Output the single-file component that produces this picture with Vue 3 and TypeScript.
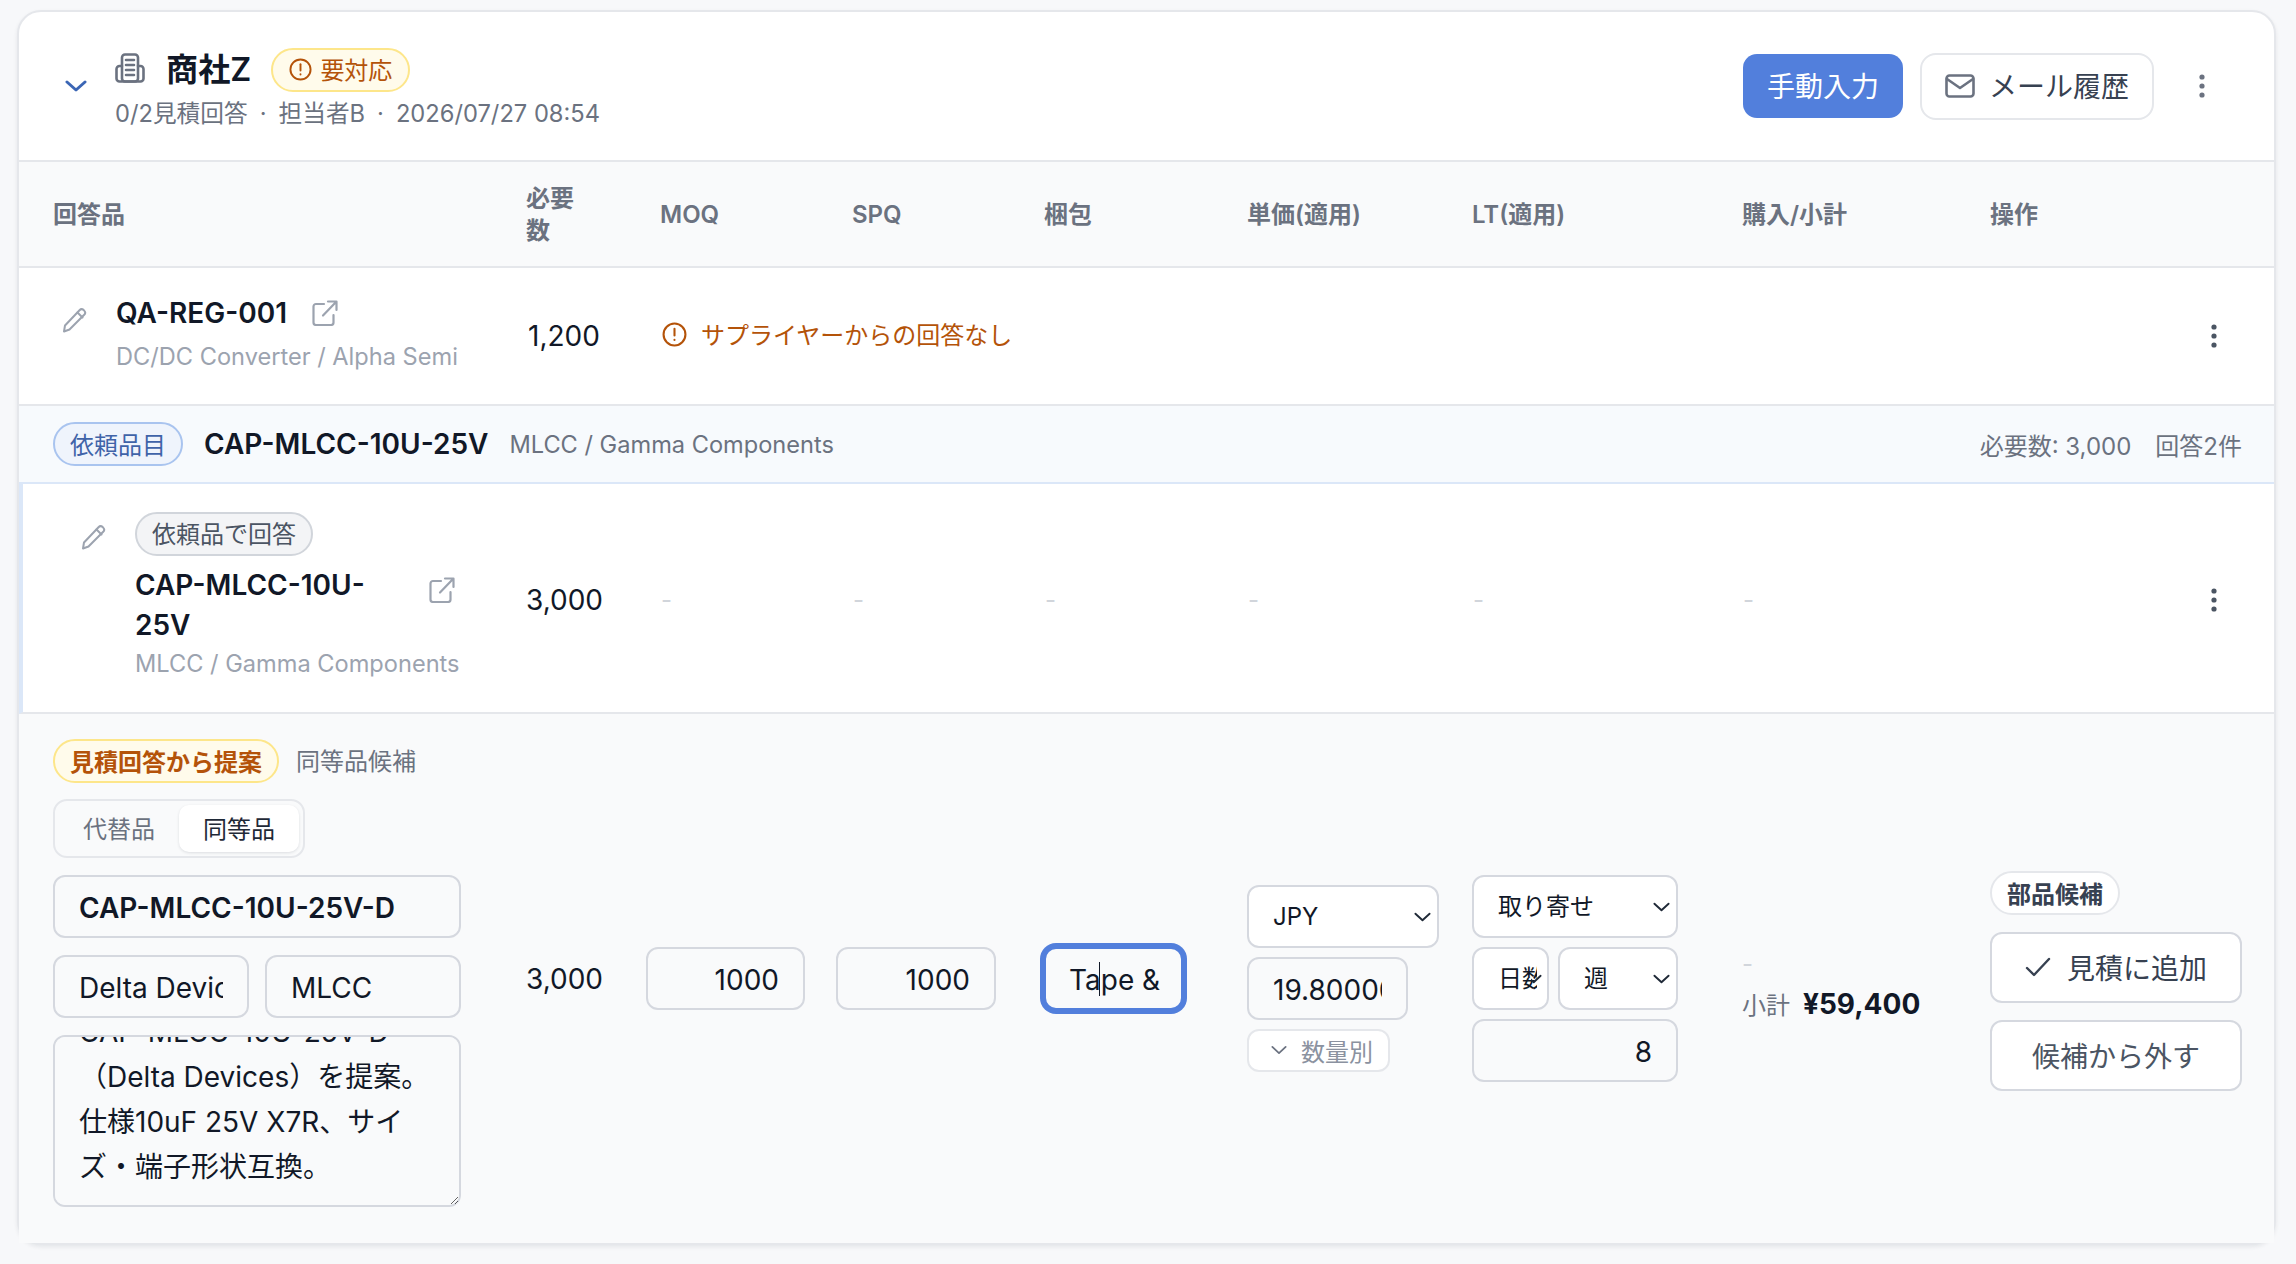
<script setup lang="ts">
import { onMounted, ref } from 'vue';

const columns = ['回答品', '必要数', 'MOQ', 'SPQ', '梱包', '単価(適用)', 'LT(適用)', '購入/小計', '操作'];
const emptyCells = 6;
const noteText = 'CAP-MLCC-10U-25V-D（Delta Devices）を提案。仕様10uF 25V X7R、サイズ・端子形状互換。';

const noteRef = ref<HTMLTextAreaElement | null>(null);

onMounted(() => {
    if (noteRef.value) noteRef.value.scrollTop = noteRef.value.scrollHeight;
});
</script>

<template>
    <div class="page">
        <section class="card">
            <header class="head">
                <svg class="head-chevron" viewBox="0 0 22 12" fill="none" stroke="#3b66b5" stroke-width="3" stroke-linecap="round" stroke-linejoin="round">
                    <polyline points="2 2 11 10 20 2" />
                </svg>
                <svg class="building" viewBox="0 0 30 30" fill="none" stroke="#6b7280" stroke-width="2.6" stroke-linecap="round" stroke-linejoin="round">
                    <rect x="7" y="1.5" width="16" height="27" rx="3" />
                    <path d="M7 13H4.500a3 3 0 0 0-3 3v9.500a3 3 0 0 0 3 3h21a3 3 0 0 0 3-3V16a3 3 0 0 0-3-3H23" />
                    <path d="M11 7h8M11 12h8M11 17h8M11 22h8" />
                </svg>
                <div class="head-main">
                    <div class="head-title">
                        <h2>商社Z</h2>
                        <span class="pill pill-warn">
                            <svg class="icon-alert-sm" viewBox="0 0 24 24" fill="none" stroke="#b45309" stroke-width="2" stroke-linecap="round">
                                <circle cx="12" cy="12" r="10.500" />
                                <line x1="12" y1="6.500" x2="12" y2="13" />
                                <line x1="12" y1="17" x2="12" y2="17.200" />
                            </svg>
                            要対応
                        </span>
                    </div>
                    <div class="head-sub">
                        <span>0/2見積回答</span>
                        <span>·</span>
                        <span>担当者B</span>
                        <span>·</span>
                        <span>2026/07/27 08:54</span>
                    </div>
                </div>
                <button class="btn-primary">手動入力</button>
                <button class="btn-mail">
                    <svg class="icon-mail" viewBox="0 0 30 24" fill="none" stroke="#6b7280" stroke-width="2.600" stroke-linecap="round" stroke-linejoin="round">
                        <rect x="1.500" y="1.500" width="27" height="21" rx="3" />
                        <polyline points="2 5 15 14 28 5" />
                    </svg>
                    メール履歴
                </button>
                <svg class="kebab kebab-head" viewBox="0 0 10 24" fill="#6b7280">
                    <circle cx="5" cy="3" r="2.600" />
                    <circle cx="5" cy="12" r="2.600" />
                    <circle cx="5" cy="21" r="2.600" />
                </svg>
            </header>

            <div class="grid-row thead">
                <div v-for="c in columns" :key="c" class="th">{{ c }}</div>
            </div>

            <!-- 回答なしの行 -->
            <div class="grid-row row-plain">
                <div class="part-cell">
                    <svg class="pencil" viewBox="0 0 26 26" fill="none" stroke="#9ca3af" stroke-width="2" stroke-linecap="round" stroke-linejoin="round">
                        <path d="M3 18.500 17.500 3.200a3 3 0 0 1 4.200-.1l.5.5a3 3 0 0 1 0 4.200L7.500 22.500 2 24.500z" />
                        <path d="M15.500 5.500l5 5" />
                    </svg>
                    <div class="part-text">
                        <div class="part-line">
                            <span class="part-name">QA-REG-001</span>
                            <svg class="ext" viewBox="0 0 26 26" fill="none" stroke="#9ca3af" stroke-width="2.200" stroke-linecap="round" stroke-linejoin="round">
                                <path d="M12 4H4a2.500 2.500 0 0 0-2.500 2.500v16A2.500 2.500 0 0 0 4 25h15a2.500 2.500 0 0 0 2.500-2.500V15" />
                                <path d="M16 1.500h8.500V10M24 2 11 15.500" />
                            </svg>
                        </div>
                        <div class="part-sub">DC/DC Converter / Alpha Semi</div>
                    </div>
                </div>
                <div class="qty">1,200</div>
                <div class="no-answer">
                    <svg class="icon-alert" viewBox="0 0 24 24" fill="none" stroke="#b45309" stroke-width="2" stroke-linecap="round">
                        <circle cx="12" cy="12" r="10.500" />
                        <line x1="12" y1="6.500" x2="12" y2="13" />
                        <line x1="12" y1="17" x2="12" y2="17.200" />
                    </svg>
                    サプライヤーからの回答なし
                </div>
                <div class="op-cell">
                    <svg class="kebab" viewBox="0 0 10 24" fill="#4b5563">
                        <circle cx="5" cy="3" r="2.600" />
                        <circle cx="5" cy="12" r="2.600" />
                        <circle cx="5" cy="21" r="2.600" />
                    </svg>
                </div>
            </div>

            <!-- 依頼品目 -->
            <div class="request-bar">
                <span class="pill pill-blue">依頼品目</span>
                <span class="request-name">CAP-MLCC-10U-25V</span>
                <span class="request-sub">MLCC / Gamma Components</span>
                <span class="request-right">必要数: 3,000</span>
                <span class="request-count">回答2件</span>
            </div>

            <div class="grid-row row-answer">
                <div class="part-cell part-cell-answer">
                    <svg class="pencil pencil-answer" viewBox="0 0 26 26" fill="none" stroke="#9ca3af" stroke-width="2" stroke-linecap="round" stroke-linejoin="round">
                        <path d="M3 18.500 17.500 3.200a3 3 0 0 1 4.200-.1l.5.5a3 3 0 0 1 0 4.200L7.500 22.500 2 24.500z" />
                        <path d="M15.500 5.500l5 5" />
                    </svg>
                    <div class="part-text">
                        <span class="pill pill-grey">依頼品で回答</span>
                        <div class="part-line part-line-wrap">
                            <span class="part-name">CAP-MLCC-10U-25V</span>
                            <svg class="ext" viewBox="0 0 26 26" fill="none" stroke="#9ca3af" stroke-width="2.200" stroke-linecap="round" stroke-linejoin="round">
                                <path d="M12 4H4a2.500 2.500 0 0 0-2.500 2.500v16A2.500 2.500 0 0 0 4 25h15a2.500 2.500 0 0 0 2.500-2.500V15" />
                                <path d="M16 1.500h8.500V10M24 2 11 15.500" />
                            </svg>
                        </div>
                        <div class="part-sub">MLCC / Gamma Components</div>
                    </div>
                </div>
                <div class="qty">3,000</div>
                <div v-for="n in emptyCells" :key="n" class="dash">-</div>
                <div class="op-cell">
                    <svg class="kebab" viewBox="0 0 10 24" fill="#4b5563">
                        <circle cx="5" cy="3" r="2.600" />
                        <circle cx="5" cy="12" r="2.600" />
                        <circle cx="5" cy="21" r="2.600" />
                    </svg>
                </div>
            </div>

            <!-- 提案の編集行 -->
            <div class="edit-row">
                <div class="edit-left">
                    <div class="edit-tags">
                        <span class="pill pill-suggest">見積回答から提案</span>
                        <span class="edit-tag-text">同等品候補</span>
                    </div>
                    <div class="tabs">
                        <span class="tab">代替品</span>
                        <span class="tab tab-active">同等品</span>
                    </div>
                    <input class="field field-bold" value="CAP-MLCC-10U-25V-D" />
                    <div class="field-pair">
                        <input class="field" value="Delta Devices" />
                        <input class="field" value="MLCC" />
                    </div>
                    <textarea ref="noteRef" class="note" :value="noteText" rows="3"></textarea>
                </div>
                <div class="edit-qty">3,000</div>
                <input class="field field-num field-moq" value="1000" />
                <input class="field field-num field-spq" value="1000" />
                <div class="pack-wrap">
                    <input class="field field-focus" value="Tape &amp; Reel" />
                    <span class="caret"></span>
                </div>
                <div class="price-col">
                    <div class="select-wrap">
                        <select class="select select-cur">
                            <option>JPY</option>
                        </select>
                        <svg class="select-chevron" viewBox="0 0 18 10" fill="none" stroke="#1f2937" stroke-width="2" stroke-linecap="round" stroke-linejoin="round">
                            <polyline points="1.500 1.500 9 8.500 16.500 1.500" />
                        </svg>
                    </div>
                    <input class="field field-price" value="19.80000" />
                    <button class="tier-btn">
                        <svg class="tier-chevron" viewBox="0 0 18 10" fill="none" stroke="#6b7280" stroke-width="2" stroke-linecap="round" stroke-linejoin="round">
                            <polyline points="1.500 1.500 9 8.500 16.500 1.500" />
                        </svg>
                        数量別
                    </button>
                </div>
                <div class="lt-col">
                    <div class="select-wrap">
                        <select class="select">
                            <option>取り寄せ</option>
                        </select>
                        <svg class="select-chevron" viewBox="0 0 18 10" fill="none" stroke="#1f2937" stroke-width="2" stroke-linecap="round" stroke-linejoin="round">
                            <polyline points="1.500 1.500 9 8.500 16.500 1.500" />
                        </svg>
                    </div>
                    <div class="lt-units">
                        <div class="select-wrap lt-days">
                            <select class="select">
                                <option>日数</option>
                            </select>
                            <svg class="select-chevron" viewBox="6 0 12 10" fill="none" stroke="#1f2937" stroke-width="2" stroke-linecap="round" stroke-linejoin="round">
                                <polyline points="1.500 1.500 9 8.500 16.500 1.500" />
                            </svg>
                        </div>
                        <div class="select-wrap lt-week">
                            <select class="select">
                                <option>週</option>
                            </select>
                            <svg class="select-chevron" viewBox="0 0 18 10" fill="none" stroke="#1f2937" stroke-width="2" stroke-linecap="round" stroke-linejoin="round">
                                <polyline points="1.500 1.500 9 8.500 16.500 1.500" />
                            </svg>
                        </div>
                    </div>
                    <input class="field field-num" value="8" />
                </div>
                <div class="sum-col">
                    <div class="dash">-</div>
                    <div class="sum-line">
                        <span class="sum-label">小計</span>
                        <b>¥59,400</b>
                    </div>
                </div>
                <div class="action-col">
                    <span class="pill pill-white">部品候補</span>
                    <button class="btn-outline">
                        <svg class="icon-check" viewBox="0 0 26 20" fill="none" stroke="#374151" stroke-width="2.400" stroke-linecap="round" stroke-linejoin="round">
                            <polyline points="2 11 9 18 24 2" />
                        </svg>
                        見積に追加
                    </button>
                    <button class="btn-outline btn-remove">候補から外す</button>
                </div>
            </div>
        </section>
    </div>
</template>

<style>
html,
body {
    background: #f7f8fa;
}
</style>

<style scoped>
.page {
    padding: 10px 20px 16px 17px;
    font-family: Inter, 'Noto Sans CJK JP', sans-serif;
    color: #111827;
    font-size: 28px;
}

.card {
    background: #fff;
    border: 2px solid #e5e7eb;
    border-radius: 24px;
    box-shadow: 0 2px 4px rgba(17, 24, 39, 0.08);
}

/* Header */
.head {
    height: 148px;
    display: flex;
    align-items: center;
    padding: 0 48px 0 46px;
    border-bottom: 2px solid #e5e7eb;
    box-sizing: content-box;
}
.head-chevron {
    width: 22px;
    height: 12px;
    margin-right: 28px;
    flex: none;
}
.building {
    width: 30px;
    height: 30px;
    flex: none;
    position: relative;
    top: -18px;
    margin-right: -30px;
}
.head-main {
    flex: 1;
    display: flex;
    flex-direction: column;
    gap: 5px;
    margin-top: 6px;
}
.head-title {
    display: flex;
    align-items: center;
    gap: 20px;
    padding-left: 51px;
}
.head-title h2 {
    margin: 0;
    font-size: 32.2px;
    font-weight: 600;
    line-height: 44px;
}
.head-sub {
    display: flex;
    gap: 12px;
    font-size: 23.7px;
    line-height: 34px;
    color: #6b7280;
}

.pill {
    display: inline-flex;
    align-items: center;
    height: 44px;
    box-sizing: border-box;
    padding: 0 15px 2px;
    border-radius: 22px;
    border: 2px solid #e5e7eb;
    font-size: 24px;
    white-space: nowrap;
}
.pill-warn {
    background: #fffbeb;
    border-color: #fde68a;
    color: #b45309;
    gap: 8px;
    padding: 0 16px 2px;
}
.pill-blue {
    background: #eff4fc;
    border-color: #a9c4ef;
    color: #3f63a8;
}
.pill-grey {
    background: #f3f4f6;
    border-color: #d1d5db;
    color: #4b5563;
    align-self: flex-start;
}
.pill-suggest {
    background: #fffbeb;
    border-color: #fde68a;
    color: #b45309;
    font-weight: 600;
}
.pill-white {
    background: #fff;
    color: #374151;
    font-weight: 600;
    align-self: flex-start;
    padding-bottom: 0;
}
.icon-alert-sm {
    width: 23px;
    height: 23px;
    margin-top: 2px;
}

.btn-primary {
    width: 160px;
    height: 64px;
    border: 0;
    border-radius: 14px;
    background: #527fdc;
    color: #fff;
    font: inherit;
    font-size: 28px;
    margin-right: 17px;
    padding: 0 0 2px;
}
.btn-mail {
    width: 234px;
    height: 67px;
    display: flex;
    align-items: center;
    justify-content: center;
    gap: 14px;
    border: 2px solid #e5e7eb;
    border-radius: 16px;
    background: #fff;
    color: #374151;
    font: inherit;
    font-size: 28px;
    margin-right: 43px;
    padding: 0 0 2px;
}
.icon-mail {
    width: 30px;
    height: 24px;
    margin-top: 2px;
}
.kebab {
    width: 10px;
    height: 24px;
    flex: none;
}
.kebab-head {
    margin-right: 19px;
}

/* Table grid */
.grid-row {
    display: grid;
    grid-template-columns: 473px 134px 192px 192px 203px 225px 270px 248px 1fr;
    align-items: center;
    padding: 0 32px 0 34px;
    border-bottom: 2px solid #e5e7eb;
}
.thead {
    height: 104px;
    background: #f9fafb;
}
.th {
    font-size: 24px;
    font-weight: 600;
    color: #6b7280;
    line-height: 32px;
    margin-top: 2px;
}
.th:nth-child(2) {
    width: 56px;
}

.row-plain {
    height: 136px;
}
.part-cell {
    display: flex;
    align-items: flex-start;
}
.row-plain .part-cell {
    margin-top: -6px;
}
.row-plain .qty {
    padding-left: 2px;
}
.pencil {
    width: 26px;
    height: 26px;
    flex: none;
    margin: 14px 28px 0 9px;
}
.part-text {
    display: flex;
    flex-direction: column;
}
.part-line {
    display: flex;
    align-items: center;
    gap: 25px;
}
.part-name {
    font-weight: 600;
    line-height: 40px;
}
.part-sub {
    font-size: 23.6px;
    color: #9ca3af;
    line-height: 32px;
    margin-top: 8px;
}
.ext {
    width: 26px;
    height: 26px;
    flex: none;
}
.qty {
    line-height: 36px;
}
.no-answer {
    grid-column: 3 / 9;
    display: flex;
    align-items: center;
    gap: 14px;
    font-size: 24px;
    color: #b45309;
    margin-top: -5px;
    padding-left: 2px;
}
.icon-alert {
    width: 25px;
    height: 25px;
    margin-top: 2px;
}
.op-cell {
    display: flex;
    justify-content: flex-end;
    padding-right: 23px;
}
.dash {
    color: #d1d5db;
    font-size: 24px;
}

/* Request bar */
.request-bar {
    height: 76px;
    display: flex;
    align-items: center;
    padding: 0 32px 0 34px;
    background: #f7fafd;
    border-bottom: 2px solid #dbe7f8;
}
.request-name {
    font-weight: 600;
    margin-left: 21px;
}
.request-sub {
    margin-left: 21px;
    font-size: 23.6px;
    color: #6b7280;
    flex: 1;
}
.request-right,
.request-count {
    font-size: 24px;
    color: #6b7280;
}
.request-count {
    margin-left: 24px;
}

/* Answer row */
.row-answer {
    height: 228px;
    border-left: 4px solid #dbe7f8;
    padding-left: 30px;
    align-items: center;
}
.part-cell-answer {
    align-items: flex-start;
    margin-top: -5px;
}
.row-answer .qty,
.row-answer .op-cell {
    margin-top: 3px;
}
.row-answer .dash {
    margin-top: 3px;
    padding-left: 1px;
}
.pencil-answer {
    margin: 12px 28px 0 28px;
}
.part-line-wrap {
    margin-top: 9px;
    gap: 23px;
    align-items: flex-start;
}
.part-line-wrap .part-name {
    width: 271px;
}
.part-line-wrap .ext {
    margin-top: 12px;
}
.row-answer .part-sub {
    margin-top: 3px;
}

/* Edit row */
.edit-row {
    display: grid;
    grid-template-columns: 473px 120px 190px 204px 207px 225px 270px 248px 1fr;
    align-items: center;
    padding: 25px 32px 26px 34px;
    background: #f9fafb;
}
.edit-left {
    display: flex;
    flex-direction: column;
    width: 408px;
    padding-bottom: 10px;
}
.edit-tags {
    display: flex;
    align-items: center;
    gap: 17px;
}
.edit-tag-text {
    font-size: 24px;
    color: #6b7280;
    margin-top: -3px;
}
.tabs {
    display: flex;
    align-self: flex-start;
    gap: 0;
    height: 59px;
    box-sizing: border-box;
    margin-top: 16px;
    padding: 4px;
    border: 2px solid #e5e7eb;
    border-radius: 14px;
    background: #f9fafb;
    font-size: 24px;
}
.tab {
    display: flex;
    align-items: center;
    padding: 0 24px 2px;
    color: #6b7280;
}
.tab-active {
    background: #fff;
    color: #1f2937;
    border-radius: 10px;
    box-shadow: 0 1px 3px rgba(17, 24, 39, 0.12);
}

.field {
    width: 100%;
    height: 63px;
    box-sizing: border-box;
    padding: 3px 24px 0;
    border: 2px solid #d5d8df;
    border-radius: 12px;
    background: #f9fafb;
    color: #111827;
    font: inherit;
    font-size: 28px;
    outline: none;
    min-width: 0;
}
.edit-left > .field {
    margin-top: 17px;
}
.field-bold {
    font-weight: 600;
}
.field-pair {
    display: grid;
    grid-template-columns: 196px 196px;
    gap: 16px;
    margin-top: 17px;
}
.note {
    width: 100%;
    height: 172px;
    box-sizing: border-box;
    margin-top: 17px;
    padding: 15px 24px;
    border: 2px solid #d5d8df;
    border-radius: 12px;
    background: #f9fafb;
    color: #111827;
    font: inherit;
    font-size: 28px;
    line-height: 45px;
    resize: vertical;
    outline: none;
    scrollbar-width: none;
    display: block;
}
.edit-qty {
    line-height: 36px;
    margin-top: 1px;
}
.field-num {
    text-align: right;
}
.field-moq {
    width: 159px;
}
.field-spq {
    width: 160px;
}
.pack-wrap {
    position: relative;
    width: 139px;
    margin-left: 4px;
}
.field-focus {
    height: 63px;
    border-color: #527fdc;
    background: #f9fafb;
    box-shadow: 0 0 0 4px #527fdc;
    padding: 3px 20px 0 23px;
}
.caret {
    position: absolute;
    left: 55px;
    top: 15px;
    width: 1px;
    height: 34px;
    background: #111827;
}

.price-col {
    display: flex;
    flex-direction: column;
    align-items: flex-start;
    gap: 9px;
}
.select-wrap {
    position: relative;
    width: 100%;
}
.select {
    width: 100%;
    height: 63px;
    box-sizing: border-box;
    appearance: none;
    padding: 0 0 0 24px;
    border: 2px solid #d5d8df;
    border-radius: 12px;
    background: #fff;
    color: #111827;
    font: inherit;
    font-size: 24px;
    outline: none;
}
.select-chevron {
    position: absolute;
    right: 8px;
    top: 27px;
    width: 17px;
    height: 10px;
    pointer-events: none;
}
.select-cur {
    display: block;
}
.lt-days .select {
    padding-right: 10px;
}
.lt-days .select-chevron {
    width: 11px;
    right: 7px;
}
.price-col .select-wrap {
    width: 192px;
}
.field-price {
    width: 161px;
}
.tier-btn {
    width: 143px;
    height: 43px;
    display: flex;
    align-items: center;
    gap: 14px;
    padding: 0 0 0 22px;
    border: 2px solid #e5e7eb;
    border-radius: 12px;
    background: #fff;
    color: #8b92a0;
    font: inherit;
    font-size: 24px;
}
.tier-chevron {
    width: 16px;
    height: 10px;
}

.lt-col {
    display: flex;
    flex-direction: column;
    gap: 9px;
    width: 206px;
}
.lt-units {
    display: grid;
    grid-template-columns: 77px 120px;
    gap: 9px;
}

.sum-col {
    display: flex;
    flex-direction: column;
    gap: 8px;
    margin-top: 14px;
}
.sum-line {
    display: flex;
    align-items: center;
    gap: 13px;
}
.sum-label {
    font-size: 24px;
    color: #6b7280;
}
.sum-line b {
    font-weight: 700;
}

.action-col {
    display: flex;
    flex-direction: column;
    margin-top: 5px;
}
.btn-outline {
    height: 71px;
    display: flex;
    align-items: center;
    justify-content: center;
    gap: 16px;
    margin-top: 17px;
    border: 2px solid #d5d8df;
    border-radius: 12px;
    background: #fff;
    color: #374151;
    font: inherit;
    font-size: 28px;
}
.btn-remove {
    color: #4b5563;
}
.icon-check {
    width: 26px;
    height: 20px;
}
</style>
